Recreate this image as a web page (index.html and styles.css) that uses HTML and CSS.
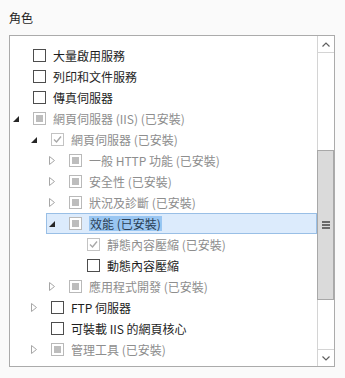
FILE: index.html
```html
<!DOCTYPE html>
<html lang="zh-Hant">
<head>
<meta charset="utf-8">
<link rel="stylesheet" href="styles.css">
</head>
<body>
<div class="page">
  <div class="title">角色</div>
  <div class="box">
    <div class="tree">
      <div class="row l0"><span class="exp"></span><span class="cb"></span><span class="label">大量啟用服務</span></div>
      <div class="row l0"><span class="exp"></span><span class="cb"></span><span class="label">列印和文件服務</span></div>
      <div class="row l0"><span class="exp"></span><span class="cb"></span><span class="label">傳真伺服器</span></div>
      <div class="row l0 dis"><span class="exp open"><svg width="6" height="6" viewBox="0 0 6 6"><polygon points="6,0 6,6 0,6" fill="#262626"/></svg></span><span class="cb ind"></span><span class="label">網頁伺服器 (IIS) (已安裝)</span></div>
      <div class="row l1 dis"><span class="exp open"><svg width="6" height="6" viewBox="0 0 6 6"><polygon points="6,0 6,6 0,6" fill="#262626"/></svg></span><span class="cb chk"><svg width="11" height="11" viewBox="0 0 11 11"><polyline points="2,5.5 4.5,8 9,2.5" fill="none" stroke="#a8a8a8" stroke-width="1.4"/></svg></span><span class="label">網頁伺服器 (已安裝)</span></div>
      <div class="row l2 dis"><span class="exp shut"><svg width="6" height="9" viewBox="0 0 6 9"><polygon points="0.5,0.5 5.5,4.5 0.5,8.5" fill="none" stroke="#a6a6a6"/></svg></span><span class="cb ind"></span><span class="label">一般 HTTP 功能 (已安裝)</span></div>
      <div class="row l2 dis"><span class="exp shut"><svg width="6" height="9" viewBox="0 0 6 9"><polygon points="0.5,0.5 5.5,4.5 0.5,8.5" fill="none" stroke="#a6a6a6"/></svg></span><span class="cb ind"></span><span class="label">安全性 (已安裝)</span></div>
      <div class="row l2 dis"><span class="exp shut"><svg width="6" height="9" viewBox="0 0 6 9"><polygon points="0.5,0.5 5.5,4.5 0.5,8.5" fill="none" stroke="#a6a6a6"/></svg></span><span class="cb ind"></span><span class="label">狀況及診斷 (已安裝)</span></div>
      <div class="row l2 dis sel"><span class="exp open"><svg width="6" height="6" viewBox="0 0 6 6"><polygon points="6,0 6,6 0,6" fill="#262626"/></svg></span><span class="cb ind"></span><span class="label hl">效能 (已安裝)</span></div>
      <div class="row l3 dis"><span class="exp"></span><span class="cb chk"><svg width="11" height="11" viewBox="0 0 11 11"><polyline points="2,5.5 4.5,8 9,2.5" fill="none" stroke="#a8a8a8" stroke-width="1.4"/></svg></span><span class="label">靜態內容壓縮 (已安裝)</span></div>
      <div class="row l3"><span class="exp"></span><span class="cb"></span><span class="label">動態內容壓縮</span></div>
      <div class="row l2 dis"><span class="exp shut"><svg width="6" height="9" viewBox="0 0 6 9"><polygon points="0.5,0.5 5.5,4.5 0.5,8.5" fill="none" stroke="#a6a6a6"/></svg></span><span class="cb ind"></span><span class="label">應用程式開發 (已安裝)</span></div>
      <div class="row l1"><span class="exp shut"><svg width="6" height="9" viewBox="0 0 6 9"><polygon points="0.5,0.5 5.5,4.5 0.5,8.5" fill="none" stroke="#a6a6a6"/></svg></span><span class="cb"></span><span class="label">FTP 伺服器</span></div>
      <div class="row l1"><span class="exp"></span><span class="cb"></span><span class="label">可裝載 IIS 的網頁核心</span></div>
      <div class="row l1 dis"><span class="exp shut"><svg width="6" height="9" viewBox="0 0 6 9"><polygon points="0.5,0.5 5.5,4.5 0.5,8.5" fill="none" stroke="#a6a6a6"/></svg></span><span class="cb ind"></span><span class="label">管理工具 (已安裝)</span></div>
    </div>
    <div class="scrollbar">
      <div class="sbtn up"><svg width="8" height="5" viewBox="0 0 8 5"><polyline points="0.5,4.5 4,1 7.5,4.5" fill="none" stroke="#606060" stroke-width="1.2"/></svg></div>
      <div class="track">
        <div class="thumb"><svg width="8" height="8" viewBox="0 0 8 8"><rect x="0" y="0" width="8" height="2" fill="#6a6a6a"/><rect x="0" y="3" width="8" height="2" fill="#6a6a6a"/><rect x="0" y="6" width="8" height="2" fill="#6a6a6a"/></svg></div>
      </div>
      <div class="sbtn down"><svg width="8" height="5" viewBox="0 0 8 5"><polyline points="0.5,0.5 4,4 7.5,0.5" fill="none" stroke="#606060" stroke-width="1.2"/></svg></div>
    </div>
  </div>
</div>
</body>
</html>
```
FILE: styles.css
```css
html, body {
  margin: 0;
  padding: 0;
  background: #fafafa;
}
body {
  font-family: "Noto Sans CJK TC", "Noto Sans", sans-serif;
  font-size: 12px;
  color: #1e1e1e;
}
.page {
  padding: 10px 0 0 9px;
}
.title {
  line-height: 16px;
  height: 16px;
  margin-bottom: 9px;
}
.box {
  width: 324px;
  height: 330px;
  border: 1px solid #ababab;
  background: #fff;
  display: flex;
  overflow: hidden;
}
.tree {
  width: 307px;
  padding-top: 9px;
  display: flex;
  flex-direction: column;
}
.row {
  height: 21px;
  display: flex;
  align-items: center;
  box-sizing: border-box;
  white-space: nowrap;
}
.l0 { margin-left: 0; }
.l1 { margin-left: 18px; }
.l2 { margin-left: 36px; }
.l3 { margin-left: 54px; }
.exp {
  width: 23px;
  height: 21px;
  flex: none;
  display: flex;
  align-items: center;
  padding-left: 3px;
  box-sizing: border-box;
}
.exp svg { display: block; }
.exp.open { padding-top: 1px; }
.cb {
  width: 13px;
  height: 13px;
  box-sizing: border-box;
  border: 1px solid #4d4d4d;
  background: #fff;
  flex: none;
  display: flex;
  align-items: center;
  justify-content: center;
}
.cb svg { display: block; }
.cb.ind {
  border-color: #b9b9b9;
  padding: 2px;
}
.cb.ind::after {
  content: "";
  display: block;
  width: 7px;
  height: 7px;
  background: #bdbdbd;
}
.cb.chk {
  border-color: #c3c3c3;
}
.label {
  margin-left: 7px;
  line-height: 15px;
}
.dis .label { color: #8e8e8e; }
.sel {
  background: #dcebfc;
  border: 1px solid #99bfe6;
}
.sel .exp { margin-left: -1px; }
.hl {
  background: #99c6f2;
  color: #2b3f55 !important;
  padding: 0 1px;
  margin-left: 7px;
}
.scrollbar {
  width: 17px;
  box-sizing: border-box;
  border-left: 1px solid #d4d4d4;
  display: flex;
  flex-direction: column;
}
.sbtn {
  height: 17px;
  box-sizing: border-box;
  display: flex;
  align-items: center;
  justify-content: center;
  flex: none;
}
.sbtn svg { display: block; }
.up { border-bottom: 1px solid #d4d4d4; }
.down { border-top: 1px solid #d4d4d4; }
.track {
  flex: 1;
  padding-top: 97px;
}
.thumb {
  margin-left: -1px;
  width: 17px;
  height: 150px;
  box-sizing: border-box;
  border: 1px solid #a8a8a8;
  background: #dadada;
  display: flex;
  align-items: center;
  justify-content: center;
}
.thumb svg { display: block; }
```
